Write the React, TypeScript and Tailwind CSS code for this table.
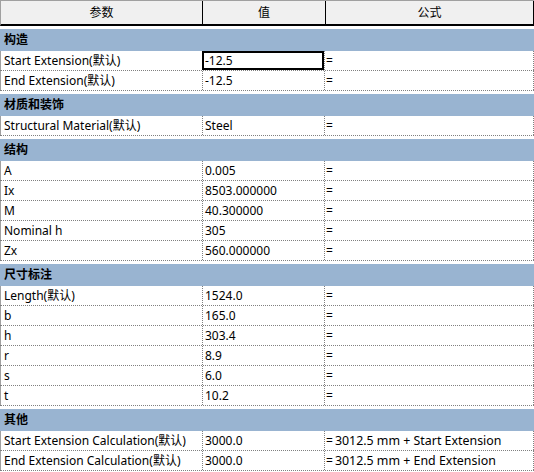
type Row = { name: string; value: string; formula?: string; selected?: boolean };
type Section = { title: string; rows: Row[] };

const sections: Section[] = [
  {
    title: "构造",
    rows: [
      { name: "Start Extension(默认)", value: "-12.5", selected: true },
      { name: "End Extension(默认)", value: "-12.5" },
    ],
  },
  {
    title: "材质和装饰",
    rows: [{ name: "Structural Material(默认)", value: "Steel" }],
  },
  {
    title: "结构",
    rows: [
      { name: "A", value: "0.005" },
      { name: "Ix", value: "8503.000000" },
      { name: "M", value: "40.300000" },
      { name: "Nominal h", value: "305" },
      { name: "Zx", value: "560.000000" },
    ],
  },
  {
    title: "尺寸标注",
    rows: [
      { name: "Length(默认)", value: "1524.0" },
      { name: "b", value: "165.0" },
      { name: "h", value: "303.4" },
      { name: "r", value: "8.9" },
      { name: "s", value: "6.0" },
      { name: "t", value: "10.2" },
    ],
  },
  {
    title: "其他",
    rows: [
      { name: "Start Extension Calculation(默认)", value: "3000.0", formula: "3012.5 mm + Start Extension" },
      { name: "End Extension Calculation(默认)", value: "3000.0", formula: "3012.5 mm + End Extension" },
    ],
  },
];

function DataRow({ row }: { row: Row }) {
  return (
    <div className="relative flex h-[20px] border-b border-dotted border-[#808080]">
      <div className="w-[202px] shrink-0 border-l border-solid border-[#a0a0a0] pl-[3px] leading-[19px] whitespace-nowrap">
        {row.name}
      </div>
      <div className="w-[122px] shrink-0 border-l border-dotted border-[#808080] pl-[2px] leading-[19px] whitespace-nowrap">
        {row.value}
      </div>
      <div className="flex-1 border-l border-r border-dotted border-[#808080] pl-[1px] leading-[19px] whitespace-nowrap">
        ={row.formula ? <span className="ml-[2px] text-[12.4px]">{row.formula}</span> : null}
      </div>
      {row.selected && (
        <div className="absolute left-[202px] top-0 h-[19px] w-[122px] border-2 border-black" />
      )}
    </div>
  );
}

export default function App() {
  return (
    <div
      className="h-[472px] w-[534px] overflow-hidden bg-white text-[12px] text-black"
      style={{ fontFamily: '"Noto Sans", "Noto Sans CJK SC", sans-serif' }}
    >
      <div className="flex h-[26px] border-t border-l border-[#a0a0a0] border-b-2 border-b-black bg-[#f0f0f0]">
        <div className="flex w-[201px] shrink-0 items-center justify-center">参数</div>
        <div className="flex w-[123px] shrink-0 items-center justify-center border-l border-black">值</div>
        <div className="flex flex-1 items-center justify-center border-l border-r border-black">公式</div>
      </div>
      {sections.map((s) => (
        <div key={s.title}>
          <div className="mt-[3px] h-[22px] bg-[#99b4d1] pl-[4px] font-bold leading-[22px]">{s.title}</div>
          {s.rows.map((r) => (
            <DataRow key={r.name} row={r} />
          ))}
        </div>
      ))}
    </div>
  );
}
